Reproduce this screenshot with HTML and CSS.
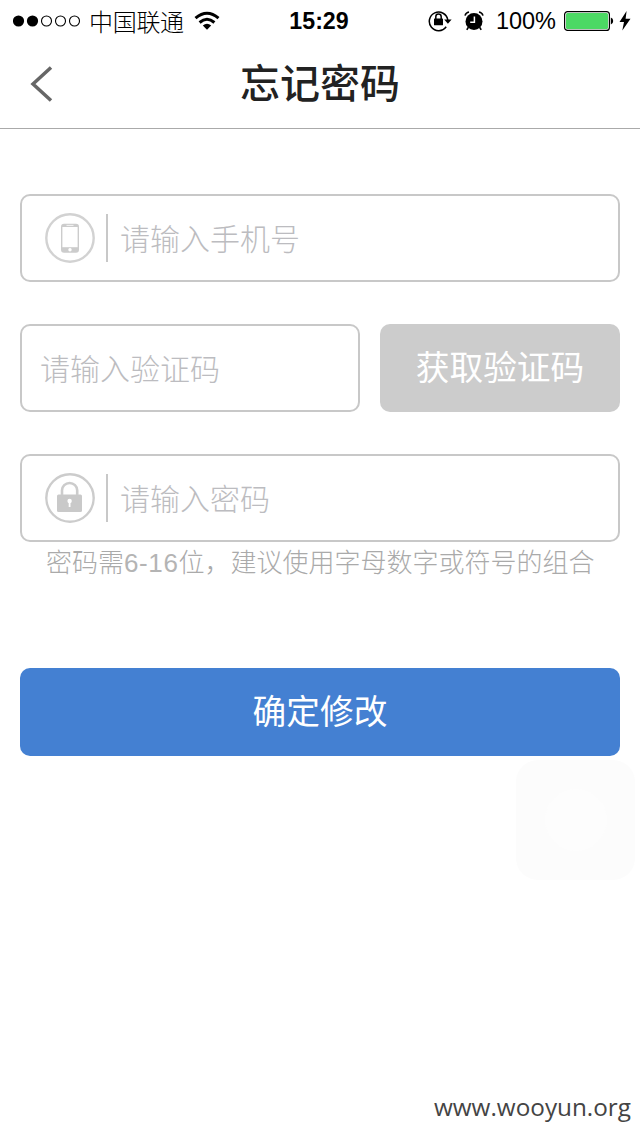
FILE: index.html
```html
<!DOCTYPE html>
<html lang="zh-CN">
<head>
<meta charset="utf-8">
<title>忘记密码</title>
<link rel="stylesheet" href="styles.css">
</head>
<body>
<div class="screen">
  <div class="status">
    <div class="status-left">
      <svg class="signal" width="68" height="12" viewBox="0 0 68 12">
        <circle cx="5.500" cy="6" r="5.600"/><circle cx="19.500" cy="6" r="5.600"/>
        <g fill="none" stroke="#000" stroke-width="1.100"><circle cx="33.500" cy="6" r="5"/><circle cx="47.500" cy="6" r="5"/><circle cx="61.500" cy="6" r="5"/></g>
      </svg>
      <span class="carrier">中国联通</span>
      <svg class="wifi" width="26" height="20" viewBox="0 0 26 20">
        <g fill="none" stroke="#000" stroke-width="3"><path d="M1.500 7.200Q13 -2.800 24.500 7.200"/><path d="M5.600 11.500Q13 5 20.400 11.500"/></g>
        <path d="M8.800 14.600Q13 11 17.200 14.600L13 18.800Z"/>
      </svg>
    </div>
    <span class="time">15:29</span>
    <div class="status-right">
      <svg class="rotation" width="24" height="22" viewBox="0 0 24 22">
        <path d="M18.200 16.800A9.300 9.300 0 1 1 19.800 10" fill="none" stroke="#000" stroke-width="1.500"/>
        <path d="M16.200 9.500H23.600L19.900 13.700Z"/>
        <rect x="6" y="8.500" width="9" height="6.800" rx=".6"/>
        <path d="M7.800 9V6.800a2.700 2.700 0 0 1 5.400 0V9" fill="none" stroke="#000" stroke-width="1.500"/>
      </svg>
      <svg class="alarm" width="20" height="20" viewBox="0 0 20 20">
        <circle cx="10" cy="10.500" r="8.500"/>
        <path d="M4.200 16.500L2.800 18.800M15.800 16.500L17.200 18.800" stroke="#000" stroke-width="1.600"/>
        <path d="M1 4.600Q1.800 1.800 5 1.100M19 4.600Q18.200 1.800 15 1.100" fill="none" stroke="#000" stroke-width="1.500"/>
        <path d="M10.400 5.500V11.300H6.200" fill="none" stroke="#fff" stroke-width="1.500"/>
      </svg>
      <span class="percent">100%</span>
      <svg class="battery" width="50" height="20" viewBox="0 0 50 20">
        <rect x=".6" y=".6" width="44.800" height="18.800" rx="3" fill="#fff" stroke="#000" stroke-width="1.200"/>
        <rect x="2" y="2" width="42" height="16" rx="1.500" fill="#4cd964"/>
        <path d="M46.800 6.500Q49.200 7 49.200 10T46.800 13.500Z"/>
      </svg>
      <svg class="bolt" width="12" height="20" viewBox="0 0 12 20"><path d="M7.600 0L.5 11H5L3.300 19.600L11.500 7.800H6.600Z"/></svg>
    </div>
  </div>
  <div class="navbar">
    <svg class="back" width="24" height="38" viewBox="0 0 24 38"><path d="M21 2.500L3 19L21 35.500" fill="none" stroke="#666" stroke-width="3.500"/></svg>
    <h1 class="title">忘记密码</h1>
  </div>
  <div class="form">
    <div class="field field-icon">
      <svg class="icon" width="50" height="50" viewBox="0 0 50 50">
        <circle cx="25" cy="25" r="23.700" fill="none" stroke="#d2d2d2" stroke-width="2.400"/>
        <rect x="16" y="10.700" width="18" height="29" rx="3" fill="#ccc"/>
        <rect x="17.400" y="14" width="15.200" height="20.200" fill="#fff"/>
        <path d="M21.500 12.400H28.500" stroke="#fff" stroke-width=".8"/>
        <circle cx="25" cy="36.800" r="1.700" fill="#fff"/>
      </svg>
      <span class="divider"></span>
      <span class="placeholder">请输入手机号</span>
    </div>
    <div class="code-row">
      <div class="field field-code"><span class="placeholder">请输入验证码</span></div>
      <div class="button button-code">获取验证码</div>
    </div>
    <div class="field field-icon">
      <svg class="icon" width="50" height="50" viewBox="0 0 50 50">
        <circle cx="25" cy="25" r="23.700" fill="none" stroke="#ccc" stroke-width="2.400"/>
        <rect x="12" y="21.500" width="25" height="17.500" rx="1.500" fill="#c9c9c9"/>
        <path d="M17 22V17.300a7.600 7.300 0 0 1 15.200 0V22" fill="none" stroke="#ccc" stroke-width="2.600"/>
        <circle cx="24.600" cy="28" r="2.200" fill="#fff"/><path d="M24.600 28V34" stroke="#fff" stroke-width="1.800"/>
      </svg>
      <span class="divider"></span>
      <span class="placeholder">请输入密码</span>
    </div>
    <div class="hint">密码需<span class="hint-num">6-16</span>位，建议使用字母数字或符号的组合</div>
    <div class="button button-submit">确定修改</div>
  </div>
  <div class="assist"><div class="assist-dot"></div></div>
  <div class="site">www.wooyun.org</div>
</div>
</body>
</html>
```
FILE: styles.css
```css
* { box-sizing: border-box; }
body {
  margin: 0;
  background: #fff;
  font-family: "Liberation Sans", "Noto Sans CJK SC", sans-serif;
}
svg { display: block; flex: none; }
.screen {
  position: relative;
  display: flex;
  flex-direction: column;
  width: 640px;
  height: 1136px;
  overflow: hidden;
  white-space: nowrap;
}
.status {
  display: grid;
  grid-template-columns: 1fr auto 1fr;
  align-items: center;
  height: 40px;
  padding: 0 9px 0 13px;
  color: #000;
}
.status-left, .status-right { display: flex; align-items: center; }
.status-right { justify-content: flex-end; }
.carrier {
  margin-left: 8px;
  font: 300 24px/38px "Noto Sans CJK SC", sans-serif;
  letter-spacing: -0.3px;
}
.wifi { margin-left: 10px; }
.time { margin-right: 6px; font-size: 23.2px; font-weight: 700; line-height: 40px; }
.rotation { margin-right: 12px; }
.alarm { margin-right: 12px; }
.percent { font-size: 23.5px; line-height: 42px; }
.battery { margin: 0 5px 0 8px; }
.navbar {
  display: grid;
  grid-template-columns: 60px 1fr 60px;
  align-items: center;
  height: 89px;
  border-bottom: 1px solid #aaa;
}
.back { margin-left: 30px; }
.title {
  margin: 0;
  padding-bottom: 6px;
  font: 500 40px/60px "Noto Sans CJK SC", sans-serif;
  color: #222;
  text-align: center;
}
.form { display: flex; flex-direction: column; padding: 65px 20px 0; }
.field {
  display: flex;
  align-items: center;
  height: 88px;
  border: 2px solid #c8c8c8;
  border-radius: 10px;
}
.field-icon { padding-left: 23px; }
.divider { width: 2px; height: 48px; margin: 0 12px 0 11px; background: #c8c8c8; }
.placeholder {
  padding-bottom: 3px;
  font: 300 30px/44px "Noto Sans CJK SC", sans-serif;
  color: #bcbcc0;
}
.code-row { display: flex; gap: 20px; margin: 42px 0; }
.field-code { width: 340px; padding-left: 18px; }
.button {
  height: 88px;
  border-radius: 10px;
  font: 400 33.7px/84px "Noto Sans CJK SC", sans-serif;
  color: #fff;
  text-align: center;
}
.button-code { width: 240px; background: #ccc; }
.hint {
  height: 40px;
  padding-left: 26px;
  font: 300 26px/38px "Noto Sans CJK SC", sans-serif;
  color: #aaa;
}
.hint-num { font-family: "Liberation Sans", sans-serif; letter-spacing: 0.6px; color: #b4b4b4; }
.button-submit { margin-top: 86px; background: #4480d2; }
.assist {
  position: absolute;
  left: 516px;
  top: 760px;
  display: grid;
  place-items: center;
  width: 119px;
  height: 120px;
  border-radius: 22px;
  background: #fcfcfc;
}
.assist-dot { width: 62px; height: 62px; border-radius: 50%; background: #fdfdfd; }
.site {
  margin-top: auto;
  padding: 0 9px 12px 0;
  font: 400 24.3px/34px "Open Sans", "Noto Sans", sans-serif;
  color: #444;
  text-align: right;
}
```
